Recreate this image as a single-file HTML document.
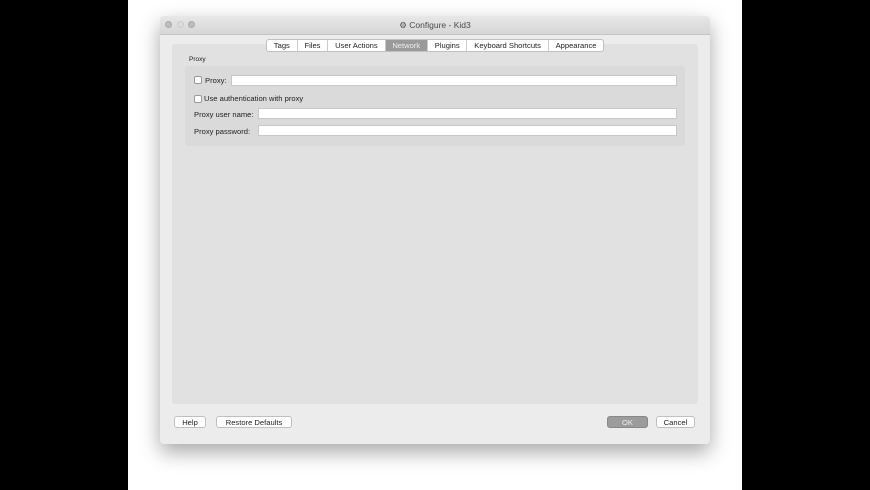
<!DOCTYPE html><html><head><style>
body{margin:0;width:870px;height:490px;background:#000;position:relative;overflow:hidden;font-family:"Liberation Sans",sans-serif;font-size:7.6px;color:#222}
.a{position:absolute}
.bg{left:128px;top:0;width:614px;height:490px;background:#fff}
.win{left:160px;top:16px;width:550px;height:428px;background:#ececec;border-radius:4px;box-shadow:0 8px 20px rgba(0,0,0,.35)}
.tb{left:0;top:0;width:550px;height:18px;background:linear-gradient(#e8e8e8,#d6d6d6);border-bottom:1px solid #c4c4c4;border-radius:4px 4px 0 0;text-align:center;line-height:18px;color:#4a4a4a;font-size:8.5px}
.dot{top:5px;width:7px;height:7px;border-radius:50%;background:#bdbdbd;border:1px solid #aaa;box-sizing:border-box}
.panel{left:12px;top:28px;width:526px;height:360px;background:#e1e1e1;border-radius:3px}
.grp{left:25px;top:50px;width:500px;height:80px;background:#dadada;border-radius:3px}
.tabs{left:106px;top:23px;height:11px;display:flex;border:1px solid #c0c0c0;border-radius:3px;background:#fff;overflow:hidden}
.tabs div{padding:0 6.8px;line-height:11px;border-right:1px solid #ccc;font-size:7.6px}
.tabs .s{background:#9a9a9a;color:#eee}
.in{background:#fff;border:1px solid #c8c8c8;height:11px;box-sizing:border-box}
.cb{width:8px;height:8px;background:#fff;border:1px solid #999;border-radius:2px;box-sizing:border-box}
.btn{height:12px;border:1px solid #c0c0c0;border-radius:3px;background:#fff;text-align:center;line-height:11px;box-sizing:border-box;font-size:7.6px}
</style></head><body>
<div class="a bg"></div>
<div class="a win">
<div class="a tb">⚙ Configure - Kid3</div>
<div class="a dot" style="left:5px"></div><div class="a dot" style="left:17px;background:#ddd;border-color:#ccc"></div><div class="a dot" style="left:28px"></div>
<div class="a panel"></div>
<div class="a tabs"><div>Tags</div><div>Files</div><div>User Actions</div><div class="s">Network</div><div>Plugins</div><div>Keyboard Shortcuts</div><div style="border:0">Appearance</div></div>
<div class="a" style="left:29px;top:40px;font-size:6.5px">Proxy</div>
<div class="a grp"></div>
<div class="a cb" style="left:34px;top:60px"></div><div class="a" style="left:45px;top:60px">Proxy:</div>
<div class="a in" style="left:71px;top:59px;width:446px"></div>
<div class="a cb" style="left:34px;top:79px"></div><div class="a" style="left:44px;top:78px">Use authentication with proxy</div>
<div class="a" style="left:34px;top:94px">Proxy user name:</div><div class="a in" style="left:98px;top:92px;width:419px"></div>
<div class="a" style="left:34px;top:111px">Proxy password:</div><div class="a in" style="left:98px;top:109px;width:419px"></div>
<div class="a btn" style="left:14px;top:400px;width:32px">Help</div>
<div class="a btn" style="left:56px;top:400px;width:76px">Restore Defaults</div>
<div class="a btn" style="left:447px;top:400px;width:41px;background:#9c9c9c;color:#eee;border-color:#888">OK</div>
<div class="a btn" style="left:496px;top:400px;width:39px">Cancel</div>
</div>
</body></html>
